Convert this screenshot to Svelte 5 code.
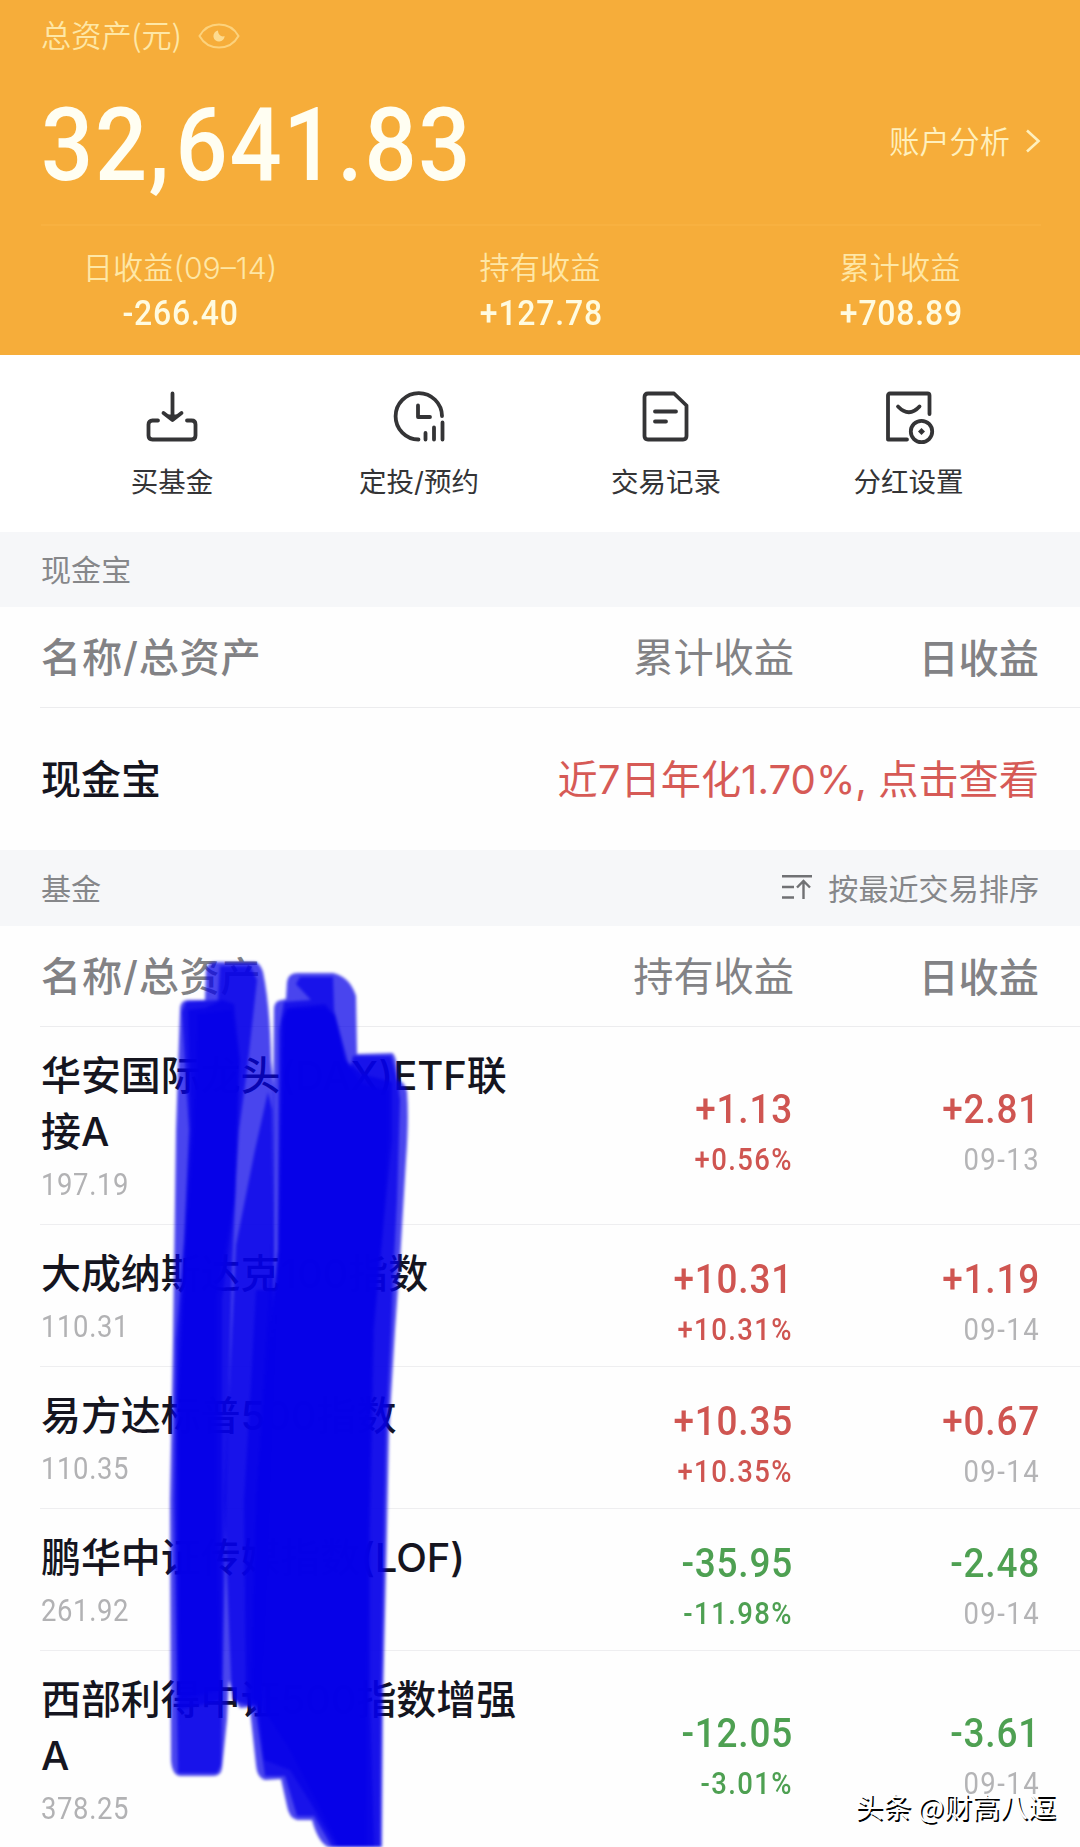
<script>
    const summary = [
        { label: "日收益(09–14)", value: "-266.40" },
        { label: "持有收益", value: "+127.78" },
        { label: "累计收益", value: "+708.89" }
    ];

    const actions = [
        { icon: "buy", label: "买基金" },
        { icon: "plan", label: "定投/预约" },
        { icon: "record", label: "交易记录" },
        { icon: "bonus", label: "分红设置" }
    ];

    const funds = [
        { name: "华安国际龙头(DAX)ETF联接A", amount: "197.19", hold: "+1.13", rate: "+0.56%", day: "+2.81", date: "09-13" },
        { name: "大成纳斯达克100指数", amount: "110.31", hold: "+10.31", rate: "+10.31%", day: "+1.19", date: "09-14" },
        { name: "易方达标普500指数", amount: "110.35", hold: "+10.35", rate: "+10.35%", day: "+0.67", date: "09-14" },
        { name: "鹏华中证传媒指数(LOF)", amount: "261.92", hold: "-35.95", rate: "-11.98%", day: "-2.48", date: "09-14" },
        { name: "西部利得中证500指数增强A", amount: "378.25", hold: "-12.05", rate: "-3.01%", day: "-3.61", date: "09-14" }
    ];

    //RED FOR GAINS, GREEN FOR LOSSES
    function isLoss(value) {
        return value.startsWith("-");
    }
</script>

<main>
    <header>
        <div class="title">
            <span>总资产(元)</span>
            <svg class="eye" width="42" height="26" viewBox="0 0 42 26">
                <path d="M1.5 13C6 5 13 1.5 21 1.5S36 5 40.500 13C36 21 29 24.500 21 24.500S6 21 1.500 13Z" fill="none" stroke="#fcd27c" stroke-width="2" />
                <path d="M20 7.500A5.600 5.600 0 1 0 26.600 13C24 14.500 20 12 20 7.500Z" fill="#fddb8f" />
            </svg>
        </div>
        <div class="total">
            <div class="num big">32<span class="comma">,</span>641.83</div>
            <div class="analysis">
                <span>账户分析</span>
                <svg width="16" height="24" viewBox="0 0 16 24">
                    <path d="M2 1.500L13.500 12L2 22.500" fill="none" stroke="#fff0bd" stroke-width="2.600" />
                </svg>
            </div>
        </div>
        <div class="summary">
            {#each summary as item}
                <div class="cell">
                    <span class="label">{item.label}</span>
                    <span class="num value">{item.value}</span>
                </div>
            {/each}
        </div>
    </header>

    <nav>
        {#each actions as action}
            <div class="action">
                <svg width="52" height="54" viewBox="0 0 52 54" fill="none" stroke="#343436" stroke-width="3.800" stroke-linecap="round" stroke-linejoin="round">
                    {#if action.icon === "buy"}
                        <path d="M12 29.500H6.500Q2.500 29.500 2.500 33.500V44.500Q2.500 48.500 6.500 48.500H45.500Q49.500 48.500 49.500 44.500V33.500Q49.500 29.500 45.500 29.500H41" />
                        <path d="M26.500 2.500V28M17.500 22L26.500 29L35.500 22" />
                        <path d="M20 23.500H33L26.500 30Z" fill="#343436" stroke="none" />
                    {:else if action.icon === "plan"}
                        <path d="M25.500 48.500A23.200 23.200 0 1 1 49 25" />
                        <path d="M25 14.500V26H37" />
                        <path d="M32.500 42V48.500M41 36.500V48.500M49.500 31.500V48.500" />
                    {:else if action.icon === "record"}
                        <path d="M8 2.500H34L46.500 14.500V45Q46.500 48.500 43 48.500H8Q4.500 48.500 4.500 45V6Q4.500 2.500 8 2.500Z" />
                        <path d="M15 20.500H36M15 30.500H26" />
                    {:else}
                        <path d="M24 48.500H5V4.500Q5 2.500 7 2.500H44.500Q46.500 2.500 46.500 4.500V23" />
                        <path d="M15 15.500Q26 27 36.500 15.500" />
                        <circle cx="38.500" cy="40.500" r="10.700" />
                        <path d="M38.500 37L42 40.500L38.500 44L35 40.500Z" fill="#343436" stroke="none" />
                    {/if}
                </svg>
                <span>{action.label}</span>
            </div>
        {/each}
    </nav>

    <div class="bar first">现金宝</div>
    <div class="columns">
        <span class="medium">名称/总资产</span>
        <span class="hold">累计收益</span>
        <span class="day bold">日收益</span>
    </div>
    <div class="cash">
        <span class="name">现金宝</span>
        <span class="hint">近7日年化1.70%, 点击查看</span>
    </div>

    <div class="bar">
        <span>基金</span>
        <span class="sort">
            <svg width="31" height="26" viewBox="0 0 31 26" fill="none" stroke="#707174" stroke-width="2.400">
                <path d="M0 2.200H30M0 13H12M0 23.500H12M21.500 25V7M15 13.500L21.500 7L28 13.500" />
            </svg>
            按最近交易排序
        </span>
    </div>
    <div class="columns">
        <span class="medium">名称/总资产</span>
        <span class="hold">持有收益</span>
        <span class="day bold">日收益</span>
    </div>
    {#each funds as fund}
        <div class="fund">
            <div class="info">
                <div class="name">{fund.name}</div>
                <div class="num amount">{fund.amount}</div>
            </div>
            <div class="figures hold" class:loss={isLoss(fund.hold)}>
                <span class="num profit">{fund.hold}</span>
                <span class="num rate">{fund.rate}</span>
            </div>
            <div class="figures day" class:loss={isLoss(fund.day)}>
                <span class="num profit">{fund.day}</span>
                <span class="num date">{fund.date}</span>
            </div>
        </div>
    {/each}

    <!-- marker strokes, overlapping layers get darker -->
    <svg class="marker" width="260" height="897" viewBox="160 950 260 897">
        <path d="M180 1010Q180 1000 188 1000L205 1000L206 970Q208 962 215 962L255 962Q260 963 263 972Q270 1005 271 1060L274 1090L274 1250L270 1500L262 1706L240 1708Q233 1700 229 1680L227 1720L222 1768Q221 1776 213 1776L180 1776Q172 1775 171 1760L170 1500L173 1340L176 1130Z" />
        <path d="M182 1012L186 1002L218 1000L220 966L250 966L257 980L247 1070L239 1130L236 1180L232 1270L226 1500L221 1765L217 1773L178 1773L174 1500L176 1340L184 1240L189 1130Z" />
        <path d="M188 1010L205 1008L222 1000L234 1004L240 1060L235 1200L222 1300L222 1500L222 1700L178 1710L177 1400L184 1250L191 1130Z" />
        <path d="M198 1014L232 1010L239 1060L234 1200L216 1300L216 1500L220 1690L180 1700L179 1400L186 1250L194 1130Z" />
        <path d="M268 1092L255 1150L236 1245L224 1500L232 1700L250 1706L262 1700L273 1250L272 1110Z" />
        <path d="M256 1290L250 1400L244 1500L246 1700L262 1700L278 1290Z" />
        <path d="M274 1010Q274 1000 282 1000L286 999L287 982Q288 973 298 973L333 973Q350 977 356 996L357 1054L392 1053Q397 1055 398 1080Q405 1082 407 1092Q409 1120 406 1160L400 1260L395 1330L389 1430L387 1530L383 1700L382 1847L328 1847Q318 1842 312 1820L297 1820Q289 1818 287 1806L281 1779L265 1780Q257 1778 256 1765L250 1710Q250 1690 256 1500L272 1250Z" />
        <path d="M279 1030L284 1002L311 1000L296 984L300 977L333 977L334 1010L350 1070L353 1056L391 1056L397 1078L400 1100L397 1200L394 1260L391 1330L386 1430L384 1530L381 1700L380 1847L332 1847L314 1816L297 1816L285 1776L265 1776L254 1700L256 1500L278 1250Z" />
        <path d="M282 1020L287 1008L325 1004L335 1016L345 1060L362 1074L392 1082L392 1140L382 1240L374 1330L370 1530L370 1700L374 1847L337 1847L312 1805L290 1770L264 1760L256 1690L256 1500L278 1250Z" />
        <path d="M284 1020L288 1010L325 1008L335 1016L345 1060L362 1084L388 1090L388 1140L382 1240L372 1330L368 1530L366 1847L340 1847L316 1800L290 1750L264 1710L262 1500L280 1250Z" />
    </svg>

    <div class="watermark">头条 @财高八逗</div>
</main>

<style>
    :global(body) {
        margin: 0;
        background: #fff;
    }

    main {
        position: relative;
        width: 1080px;
        height: 1847px;
        overflow: hidden;
        background: #fefefe;
        font-family: Inter, "Noto Sans CJK SC", sans-serif;
    }

    svg {
        display: block;
        flex: none;
    }

    header {
        box-sizing: border-box;
        height: 355px;
        background: #f6ad3a;
        color: #fee7a6;
        font-size: 30.2px;
        font-weight: 350;
    }

    .title {
        display: flex;
        align-items: center;
        gap: 16px;
        height: 72px;
        padding-left: 41px;
        font-family: "Noto Sans CJK SC", sans-serif;
    }

    .title span {
        margin-top: -4px;
    }

    .eye {
        margin-top: -1px;
    }

    .total {
        display: flex;
        align-items: center;
        justify-content: space-between;
        height: 152px;
        margin: 0 39px 0 41px;
        border-bottom: 2px solid #f8b140;
    }

    .num {
        font-family: Roboto, sans-serif;
        transform: scaleX(0.9);
    }

    .big {
        margin-top: -7px;
        color: #fffef2;
        font-size: 102px;
        font-weight: 500;
        letter-spacing: 1.9px;
        line-height: 120px;
        transform-origin: left;
    }

    .comma {
        margin-right: 5px;
    }

    .analysis {
        display: flex;
        align-items: center;
        gap: 15px;
        margin-top: -14px;
        color: #fff0bd;
    }

    .analysis span {
        margin-top: -3px;
    }

    .summary {
        display: grid;
        grid-template-columns: repeat(3, 1fr);
        padding-top: 20px;
    }

    .cell {
        display: flex;
        flex-direction: column;
        align-items: center;
    }

    .label {
        line-height: 44px;
    }

    .value {
        margin-left: 2px;
        color: #fffbe0;
        font-size: 35.5px;
        font-weight: 500;
        letter-spacing: 0.9px;
        line-height: 46px;
    }

    nav {
        display: grid;
        grid-template-columns: 247px 247px 247px 238px;
        height: 177px;
        padding-left: 48.5px;
        background: #fff;
    }

    .action {
        display: flex;
        flex-direction: column;
        align-items: center;
        padding-top: 36px;
        color: #343436;
        font-size: 27.5px;
        line-height: 40px;
    }

    .action span {
        margin-top: 17px;
    }

    .bar {
        box-sizing: border-box;
        display: flex;
        align-items: center;
        justify-content: space-between;
        height: 76px;
        padding: 0 41px 3px;
        background: #f6f7f9;
        color: #86878a;
        font-size: 30.1px;
    }

    .first {
        height: 75px;
    }

    .sort {
        display: flex;
        align-items: center;
        gap: 15px;
    }

    .columns {
        box-sizing: border-box;
        display: flex;
        align-items: center;
        height: 101px;
        margin-left: 40px;
        padding: 1px 41px 0 1px;
        border-bottom: 1px solid #ececee;
        color: #828285;
        font-size: 40.2px;
        line-height: 56px;
    }

    .medium {
        flex: 1;
        font-weight: 500;
        letter-spacing: 0.8px;
    }

    .bold {
        margin-top: 3px;
        font-weight: 500;
    }

    .hold {
        width: 300px;
        text-align: right;
    }

    .day {
        width: 245px;
        text-align: right;
    }

    .cash {
        display: flex;
        align-items: center;
        justify-content: space-between;
        height: 142px;
        padding: 0 41px;
        font-size: 40.2px;
        line-height: 56px;
    }

    .name {
        color: #15151f;
        font-size: 40px;
        font-weight: 500;
        line-height: 56px;
    }

    .cash .name {
        margin-top: 2px;
    }

    .hint {
        margin-top: 2px;
        color: #d65a56;
    }

    .fund {
        box-sizing: border-box;
        display: flex;
        align-items: center;
        margin-left: 40px;
        padding: 20.5px 41px 14.5px 1px;
        border-bottom: 1px solid #eeeef0;
    }

    .info {
        flex: 1;
    }

    .info .name {
        width: 480px;
        letter-spacing: -0.1px;
        word-break: break-all;
    }

    .amount {
        color: #b2b2b4;
        font-size: 30.5px;
        letter-spacing: 0.7px;
        line-height: 50px;
        transform-origin: left;
    }

    .figures {
        display: flex;
        flex-direction: column;
        margin-bottom: -4px;
        padding-top: 7px;
        color: #cf5551;
    }

    .figures.hold {
        box-sizing: border-box;
        flex: none;
        width: 200px;
        padding-right: 2px;
    }

    .figures .num {
        transform-origin: right;
    }

    .profit {
        margin-right: -1px;
        font-size: 41px;
        font-weight: 500;
        letter-spacing: 0.9px;
        line-height: 50px;
    }

    .rate,
    .date {
        font-size: 30.5px;
        letter-spacing: 1.6px;
        line-height: 51px;
    }

    .rate {
        margin-right: -1px;
        font-weight: 500;
    }

    .date {
        margin-right: -1px;
    }

    .loss {
        color: #4ea052;
    }

    .figures .date {
        color: #b4b4b6;
    }

    .marker {
        position: absolute;
        left: 160px;
        top: 950px;
        fill: #0600e8;
        fill-opacity: 0.73;
        filter: blur(1.4px);
    }

    .watermark {
        position: absolute;
        right: 24px;
        bottom: 21px;
        color: #fff;
        font-family: "Noto Sans CJK SC", sans-serif;
        font-size: 28px;
        line-height: 40px;
        text-shadow: 1.5px 1.5px 0 #000;
    }
</style>
